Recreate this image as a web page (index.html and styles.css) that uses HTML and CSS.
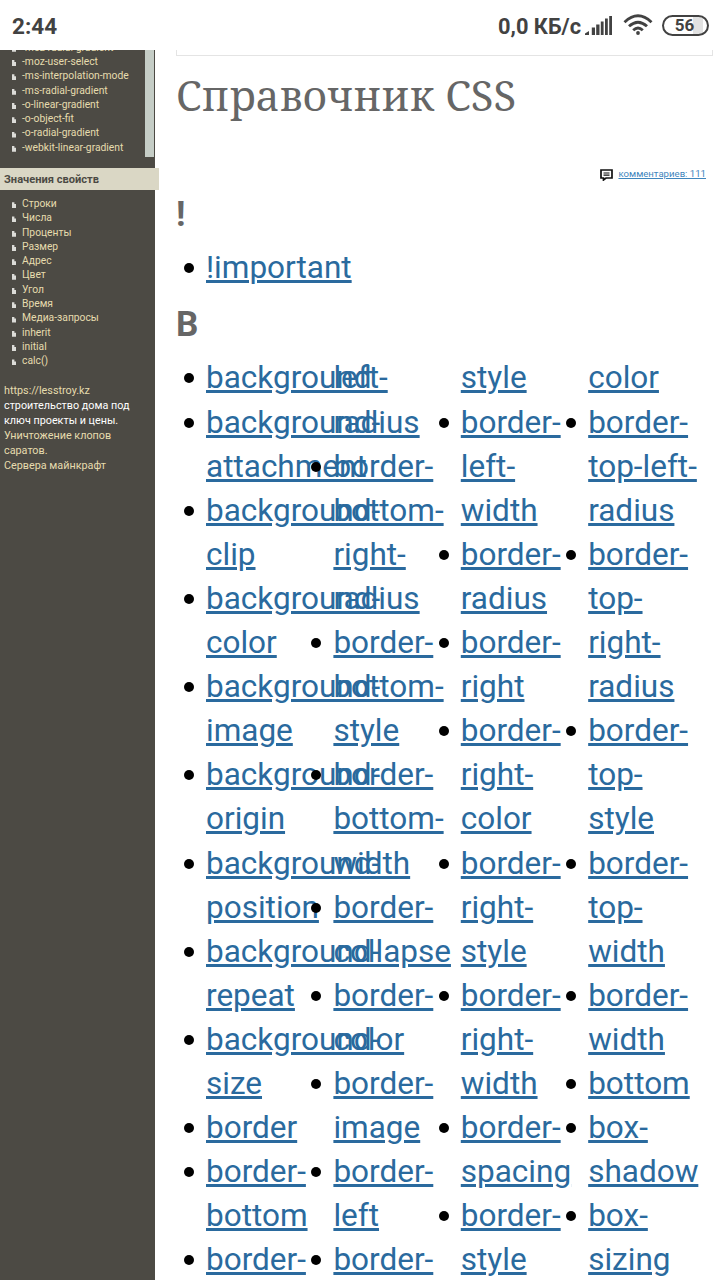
FILE: index.html
```
<!DOCTYPE html>
<html lang="ru">
<head>
    <meta charset="UTF-8">
    <meta name="viewport" content="width=device-width, initial-scale=1.0">
    <title>Справочник CSS</title>
    <link rel="stylesheet" href="styles.css">
</head>
<body>
    <!-- Строка состояния -->
    <header class="status-bar">
        <span class="clock">2:44</span>
        <div class="status-icons">
            <span class="speed">0,0 КБ/с</span>
            <svg class="signal" width="28" height="21" viewBox="0 0 28 21" fill="#424242">
                <path d="M0 20v-1.500l4-2.500v4zM6.800 12.500h3.200v7.500h-3.200zM11.200 9.500h3.300v10.500h-3.300zM15.800 6.500h2.800v13.500h-2.800zM20 3.500h2.800v16.500h-2.800zM24.200 1h2.800v19h-2.800z"/>
            </svg>
            <svg class="wifi" width="30" height="22" viewBox="0 0 30 22" fill="none" stroke="#424242" stroke-width="2.900">
                <path d="M1.500 8.200Q15-4.500 28.500 8.200M6 12.300Q15 4 24 12.300M10.200 16.200Q15 11.800 19.800 16.200"/>
                <circle cx="15" cy="19" r="1.900" fill="#424242" stroke="none"/>
            </svg>
            <span class="battery">56</span>
        </div>
    </header>

    <div class="page">
        <!-- Левое меню -->
        <aside class="sidebar">
            <div class="scroll-box">
                <ul class="menu">
                    <li>-moz-radial-gradient</li>
                    <li>-moz-user-select</li>
                    <li>-ms-interpolation-mode</li>
                    <li>-ms-radial-gradient</li>
                    <li>-o-linear-gradient</li>
                    <li>-o-object-fit</li>
                    <li>-o-radial-gradient</li>
                    <li>-webkit-linear-gradient</li>
                </ul>
                <div class="scroll-thumb"></div>
            </div>
            <h3 class="menu-title">Значения свойств</h3>
            <ul class="menu">
                <li>Строки</li>
                <li>Числа</li>
                <li>Проценты</li>
                <li>Размер</li>
                <li>Адрес</li>
                <li>Цвет</li>
                <li>Угол</li>
                <li>Время</li>
                <li>Медиа-запросы</li>
                <li>inherit</li>
                <li>initial</li>
                <li>calc()</li>
            </ul>
            <div class="ads">
                <a href="#">https://lesstroy.kz</a><br>
                строительство дома под<br>ключ проекты и цены.<br>
                <a href="#">Уничтожение клопов<br>саратов.</a><br>
                <a href="#">Сервера майнкрафт</a>
            </div>
        </aside>

        <!-- Содержимое -->
        <main class="content">
            <div class="tab-edge"></div>
            <h1>Справочник CSS</h1>
            <div class="comments">
                <svg width="13" height="12" viewBox="0 0 13 12" fill="none" stroke="#111">
                    <path d="M1 1h11v8H6L3.500 11V9H1z" stroke-width="1.700"/>
                    <path d="M3.500 4h6M3.500 6.200h6" stroke-width="1.200"/>
                </svg>
                <a href="#">комментариев: 111</a>
            </div>

            <h2>!</h2>
            <ul class="props">
                <li><a href="#">!important</a></li>
            </ul>

            <h2 class="letter">B</h2>
            <div class="columns">
                <ul class="props">
                    <li><a href="#">background</a></li>
                    <li><a href="#">background-<br>attachment</a></li>
                    <li><a href="#">background-<br>clip</a></li>
                    <li><a href="#">background-<br>color</a></li>
                    <li><a href="#">background-<br>image</a></li>
                    <li><a href="#">background-<br>origin</a></li>
                    <li><a href="#">background-<br>position</a></li>
                    <li><a href="#">background-<br>repeat</a></li>
                    <li><a href="#">background-<br>size</a></li>
                    <li><a href="#">border</a></li>
                    <li><a href="#">border-<br>bottom</a></li>
                    <li><a href="#">border-</a></li>
                </ul>
                <ul class="props">
                    <li class="rest"><a href="#">left-<br>radius</a></li>
                    <li><a href="#">border-<br>bottom-<br>right-<br>radius</a></li>
                    <li><a href="#">border-<br>bottom-<br>style</a></li>
                    <li><a href="#">border-<br>bottom-<br>width</a></li>
                    <li><a href="#">border-<br>collapse</a></li>
                    <li><a href="#">border-<br>color</a></li>
                    <li><a href="#">border-<br>image</a></li>
                    <li><a href="#">border-<br>left</a></li>
                    <li><a href="#">border-</a></li>
                </ul>
                <ul class="props">
                    <li class="rest"><a href="#">style</a></li>
                    <li><a href="#">border-<br>left-<br>width</a></li>
                    <li><a href="#">border-<br>radius</a></li>
                    <li><a href="#">border-<br>right</a></li>
                    <li><a href="#">border-<br>right-<br>color</a></li>
                    <li><a href="#">border-<br>right-<br>style</a></li>
                    <li><a href="#">border-<br>right-<br>width</a></li>
                    <li><a href="#">border-<br>spacing</a></li>
                    <li><a href="#">border-<br>style</a></li>
                </ul>
                <ul class="props">
                    <li class="rest"><a href="#">color</a></li>
                    <li><a href="#">border-<br>top-left-<br>radius</a></li>
                    <li><a href="#">border-<br>top-<br>right-<br>radius</a></li>
                    <li><a href="#">border-<br>top-<br>style</a></li>
                    <li><a href="#">border-<br>top-<br>width</a></li>
                    <li><a href="#">border-<br>width</a></li>
                    <li><a href="#">bottom</a></li>
                    <li><a href="#">box-<br>shadow</a></li>
                    <li><a href="#">box-<br>sizing</a></li>
                </ul>
            </div>
        </main>
    </div>
</body>
</html>
```
FILE: styles.css
```
* {
    box-sizing: border-box;
}

body {
    margin: 0;
    height: 1280px;
    overflow: hidden;
    background: #fff;
    font-family: Roboto, "Liberation Sans", sans-serif;
}

h1, h2, h3, ul {
    margin: 0;
    padding: 0;
}

/* Строка состояния */
.status-bar {
    height: 50px;
    padding: 0 11px 0 12px;
    display: flex;
    justify-content: space-between;
    align-items: center;
    color: #424242;
    font-weight: bold;
}

.clock {
    font-size: 22.5px;
    padding-top: 2px;
}

.status-icons {
    display: flex;
    align-items: center;
}

.speed {
    font-size: 21.8px;
    padding-top: 3px;
    margin-right: 4px;
}

.wifi {
    margin: 0 9px 0 10px;
}

.battery {
    width: 47px;
    height: 21px;
    border: 2px solid #424242;
    border-radius: 11px;
    background: linear-gradient(to right, #fff 68%, #e2e2e2 68%, #e2e2e2 90%, #fff 90%);
    font-size: 17px;
    line-height: 17px;
    text-align: center;
    padding-right: 2px;
}

.page {
    display: flex;
    height: 1230px;
}

/* Левое меню */
.sidebar {
    width: 155px;
    flex-shrink: 0;
    background: #4c4a44;
    color: #fff;
    font-size: 10.8px;
}

.scroll-box {
    height: 107px;
    margin-bottom: 11px;
    display: flex;
    align-items: flex-end;
    justify-content: space-between;
    overflow: hidden;
    padding-bottom: 2px;
}

.scroll-thumb {
    width: 9px;
    height: 107px;
    margin: 0 1px -2px 0;
    flex-shrink: 0;
    background: #c5cdc6;
}

.menu {
    list-style: none;
    font-size: 10.3px;
}

.menu li {
    height: 14.3px;
    line-height: 14.3px;
    padding-left: 12px;
    display: flex;
    align-items: center;
    color: #e6dcae;
    white-space: nowrap;
}

.menu li::before {
    content: "";
    width: 4px;
    height: 6px;
    margin: 2px 6px 0 0;
    background: #dcdcd8;
    clip-path: polygon(0 0, 60% 0, 60% 33%, 100% 33%, 100% 100%, 0 100%);
}

.menu-title {
    width: 159px;
    height: 22px;
    margin-bottom: 7px;
    padding: 1px 0 0 4px;
    background: #dad7c5;
    color: #4c4a44;
    font-size: 11.1px;
    line-height: 22px;
}

.ads {
    padding: 14px 0 0 4px;
    line-height: 15.1px;
    white-space: nowrap;
}

.ads a {
    color: #e6dcae;
    text-decoration: none;
}

/* Содержимое */
.content {
    flex: 1;
    min-width: 0;
    padding: 0 7px 0 21px;
}

.tab-edge {
    height: 6px;
    border: 1px solid #e4e4e4;
    border-top: none;
}

h1 {
    height: 81px;
    line-height: 78px;
    color: #666;
    font-family: "Noto Serif", "DejaVu Serif Condensed", "DejaVu Serif", serif;
    font-size: 41.8px;
    font-weight: normal;
    white-space: nowrap;
}

.comments {
    height: 18px;
    margin: 28px 7px 1px 0;
    display: flex;
    align-items: center;
    justify-content: flex-end;
    gap: 5px;
    font-size: 9.6px;
}

.comments svg {
    margin-top: 2px;
}

.comments a {
    color: #3f86bd;
    margin-top: -1px;
    text-underline-offset: 1px;
}

h2 {
    height: 62px;
    line-height: 62px;
    color: #666;
    font-size: 35px;
}

.letter {
    height: 66.4px;
    line-height: 69px;
}

.props {
    list-style: none;
    padding-left: 30px;
    font-size: 31.5px;
    line-height: 44.1px;
}

.props li {
    display: flex;
    white-space: nowrap;
}

.props li::before {
    content: "";
    width: 10px;
    height: 10px;
    margin: 17px 12px 0 -22px;
    flex-shrink: 0;
    border-radius: 50%;
    background: #000;
}

.props li.rest::before {
    visibility: hidden;
}

.props a {
    color: #2a6a9e;
    text-decoration-thickness: 3px;
}

.columns {
    display: grid;
    grid-template-columns: repeat(4, 127.4px);
}
```
